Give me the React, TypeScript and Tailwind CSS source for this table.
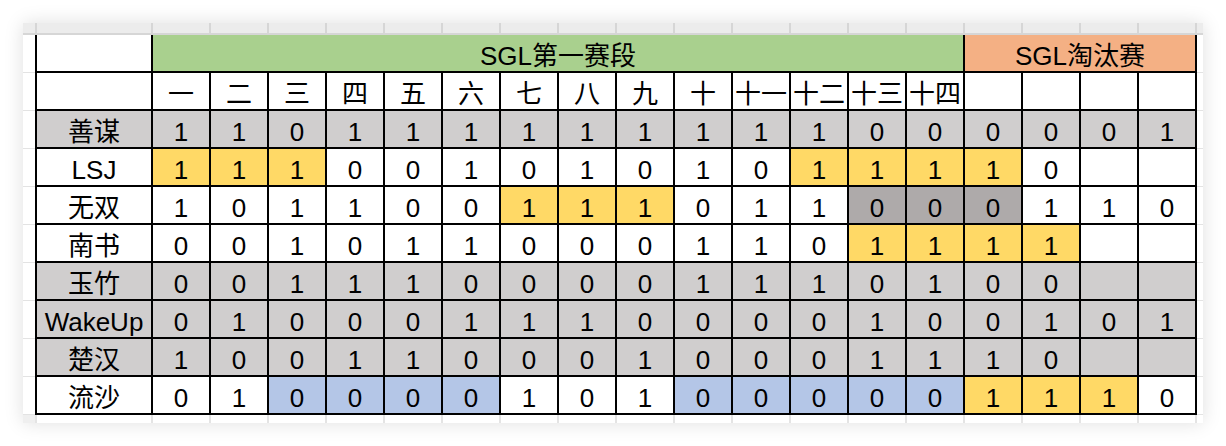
import { Fragment } from "react";

const FONT = "font-['Liberation_Sans','Noto_Sans_CJK_SC',sans-serif]";

type Tone = "w" | "g" | "y" | "d" | "b" | "green" | "orange";

const tones: Record<Tone, string> = {
  w: "bg-white",
  g: "bg-[#d0cece]",
  y: "bg-[#ffd966]",
  d: "bg-[#aeaaaa]",
  b: "bg-[#b4c6e7]",
  green: "bg-[#a9d08e]",
  orange: "bg-[#f4b084]",
};

const rounds = ["一", "二", "三", "四", "五", "六", "七", "八", "九", "十", "十一", "十二", "十三", "十四"];

// each row: name, base tone, values ("-" = empty), per-cell tone overrides
const rows: { name: string; base: Tone; vals: string; paint?: Record<number, Tone> }[] = [
  { name: "善谋", base: "g", vals: "110111111111000001" },
  {
    name: "LSJ",
    base: "w",
    vals: "1110010101011110--",
    paint: { 0: "y", 1: "y", 2: "y", 11: "y", 12: "y", 13: "y", 14: "y" },
  },
  {
    name: "无双",
    base: "w",
    vals: "101100111011000110",
    paint: { 6: "y", 7: "y", 8: "y", 12: "d", 13: "d", 14: "d" },
  },
  {
    name: "南书",
    base: "w",
    vals: "0010110001101111--",
    paint: { 12: "y", 13: "y", 14: "y", 15: "y" },
  },
  { name: "玉竹", base: "g", vals: "0011100001110100--" },
  { name: "WakeUp", base: "g", vals: "010001110000100101" },
  { name: "楚汉", base: "g", vals: "1001100010001110--" },
  {
    name: "流沙",
    base: "w",
    vals: "010000101000001110",
    paint: { 2: "b", 3: "b", 4: "b", 5: "b", 9: "b", 10: "b", 11: "b", 12: "b", 13: "b", 14: "y", 15: "y", 16: "y" },
  },
];

function Cell({ tone, children, span }: { tone: Tone; children?: React.ReactNode; span?: string }) {
  return (
    <div className={`${tones[tone]} ${span ?? ""} flex items-center justify-center pt-[6px] text-[26px] leading-none text-black whitespace-nowrap`}>
      {children}
    </div>
  );
}

function SideLines() {
  return (
    <div className="flex flex-col">
      {Array.from({ length: 10 }).map((_, i) => (
        <div key={i} className="h-[38px] border-b border-[#e3e3e3]" />
      ))}
    </div>
  );
}

export default function App() {
  return (
    <div className={`w-[1226px] h-[446px] bg-white pt-[23px] pl-[23px] ${FONT}`}>
      <div className="w-[1180px] h-[400px] bg-white overflow-hidden flex flex-col shadow-[0_0_18px_rgba(0,0,0,0.13)]">
        {/* spreadsheet column letters strip */}
        <div className="h-[12px] grid grid-cols-[12px_114px_repeat(18,56px)_1fr] grid-rows-[10px] gap-x-[2px] bg-[#d6d6d6] pb-[2px]">
          {Array.from({ length: 21 }).map((_, i) => (
            <div key={i} className="bg-[#ececec]" />
          ))}
        </div>

        <div className="flex h-[380px]">
          <div className="w-[12px]">
            <SideLines />
          </div>

          <div className="grid grid-cols-[114px_repeat(18,56px)] grid-rows-[repeat(10,36px)] gap-[2px] bg-black px-[2px] pb-[2px]">
            <Cell tone="w" />
            <Cell tone="green" span="col-span-14">SGL第一赛段</Cell>
            <Cell tone="orange" span="col-span-4">SGL淘汰赛</Cell>

            <Cell tone="w" />
            {rounds.map((r) => (
              <Cell key={r} tone="w">{r}</Cell>
            ))}
            {[0, 1, 2, 3].map((i) => (
              <Cell key={"e" + i} tone="w" />
            ))}

            {rows.map((row) => (
              <Fragment key={row.name}>
                <Cell tone={row.base}>{row.name}</Cell>
                {row.vals.split("").map((v, i) => (
                  <Cell key={i} tone={row.paint?.[i] ?? row.base}>
                    {v === "-" ? "" : v}
                  </Cell>
                ))}
              </Fragment>
            ))}
          </div>

          <div className="flex-1">
            <SideLines />
          </div>
        </div>

        {/* strip under the table */}
        <div className="h-[8px] grid grid-cols-[12px_114px_repeat(18,56px)_1fr] gap-x-[2px] bg-[#e4e4e4]">
          <div className="bg-[#efefef]" />
          {Array.from({ length: 20 }).map((_, i) => (
            <div key={i} className="bg-white" />
          ))}
        </div>
      </div>
    </div>
  );
}
